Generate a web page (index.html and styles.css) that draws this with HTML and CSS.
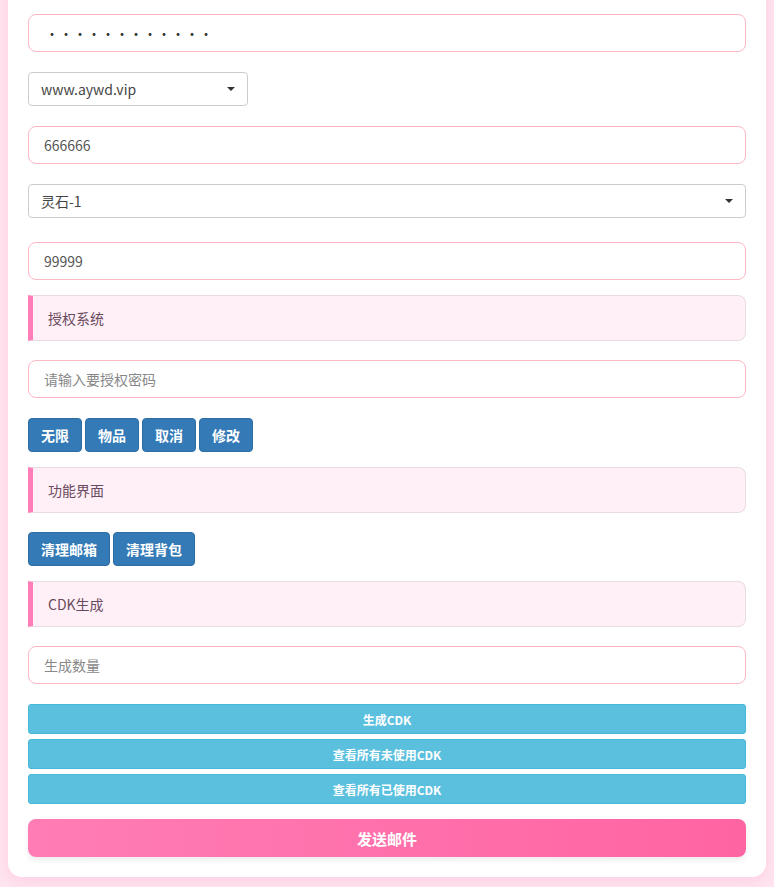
FILE: index.html
```html
<!DOCTYPE html>
<html lang="zh-CN">
<head>
<meta charset="utf-8">
<title>邮件</title>
<link rel="stylesheet" href="styles.css">
</head>
<body>
<div class="card">
  <input class="field pw" type="password" value="123456789012">
  <div class="select short"><span>www.aywd.vip</span><i class="caret"></i></div>
  <input class="field" type="text" value="666666">
  <div class="select wide"><span>灵石-1</span><i class="caret"></i></div>
  <input class="field before-title" type="text" value="99999">
  <div class="title">授权系统</div>
  <input class="field" type="text" placeholder="请输入要授权密码">
  <div class="btns">
    <button class="btn">无限</button>
    <button class="btn">物品</button>
    <button class="btn">取消</button>
    <button class="btn">修改</button>
  </div>
  <div class="title">功能界面</div>
  <div class="btns">
    <button class="btn">清理邮箱</button>
    <button class="btn">清理背包</button>
  </div>
  <div class="title">CDK生成</div>
  <input class="field" type="text" placeholder="生成数量">
  <div class="info-list">
    <button class="info">生成CDK</button>
    <button class="info">查看所有未使用CDK</button>
    <button class="info">查看所有已使用CDK</button>
  </div>
  <button class="send">发送邮件</button>
</div>
</body>
</html>
```

FILE: styles.css
```css
html, body {
  margin: 0;
  padding: 0;
}
body {
  background: #ffe4f0;
  padding: 0 8px;
  font-family: "Noto Sans CJK SC", "Noto Sans", sans-serif;
  font-size: 14px;
  color: #555;
  height: 887px;
  overflow: hidden;
}
.card {
  background: #fff;
  margin-top: -20px;
  padding: 34px 20px 20px;
  border-radius: 14px;
  box-shadow: 0 4px 14px rgba(255, 150, 190, 0.25);
  display: flex;
  flex-direction: column;
}
.field {
  box-sizing: border-box;
  display: block;
  width: 100%;
  height: 38px;
  margin: 0 0 20px;
  padding: 0 15px;
  border: 1px solid #ffb6c5;
  border-radius: 8px;
  background: #fff;
  font-family: inherit;
  font-size: 14px;
  color: #555;
  outline: none;
}
.field::placeholder {
  color: #888;
}
.pw {
  letter-spacing: 0;
  color: #333;
  padding-left: 16px;
}
.before-title {
  margin-bottom: 15px;
}
.select {
  box-sizing: border-box;
  height: 34px;
  margin-bottom: 20px;
  padding: 0 12px;
  border: 1px solid #ccc;
  border-radius: 4px;
  display: flex;
  align-items: center;
  color: #444;
  font-size: 14px;
}
.select.short {
  width: 220px;
}
.select.wide {
  margin-bottom: 24px;
}
.caret {
  margin-left: auto;
  width: 0;
  height: 0;
  border-left: 4px solid transparent;
  border-right: 4px solid transparent;
  border-top: 4px solid #333;
}
.title {
  box-sizing: border-box;
  height: 46px;
  margin-bottom: 19px;
  padding: 0 15px;
  background: #fff0f7;
  border: 1px solid #e8dce2;
  border-left: 5px solid #ff7eb9;
  border-radius: 0 8px 8px 0;
  display: flex;
  align-items: center;
  color: #6a4a60;
  font-size: 14px;
}
.btns {
  display: flex;
  gap: 3px;
  margin-bottom: 15px;
}
.btn {
  box-sizing: border-box;
  height: 34px;
  padding: 0 12px;
  background: #337ab7;
  border: 1px solid #2e6da4;
  border-radius: 4px;
  color: #fff;
  font-family: inherit;
  font-weight: bold;
  font-size: 14px;
}
.info-list {
  display: flex;
  flex-direction: column;
  gap: 5px;
  margin-bottom: 15px;
}
.info {
  box-sizing: border-box;
  height: 30px;
  width: 100%;
  background: #5bc0de;
  border: 1px solid #46b8da;
  border-radius: 3px;
  color: #fff;
  font-family: inherit;
  font-weight: bold;
  font-size: 12px;
}
.send {
  box-sizing: border-box;
  height: 38px;
  width: 100%;
  border: none;
  border-radius: 8px;
  background: linear-gradient(90deg, #ff7db4, #ff64a2);
  box-shadow: 0 3px 6px rgba(0, 0, 0, 0.08);
  color: #fff;
  font-family: inherit;
  font-weight: bold;
  font-size: 15px;
}
```
